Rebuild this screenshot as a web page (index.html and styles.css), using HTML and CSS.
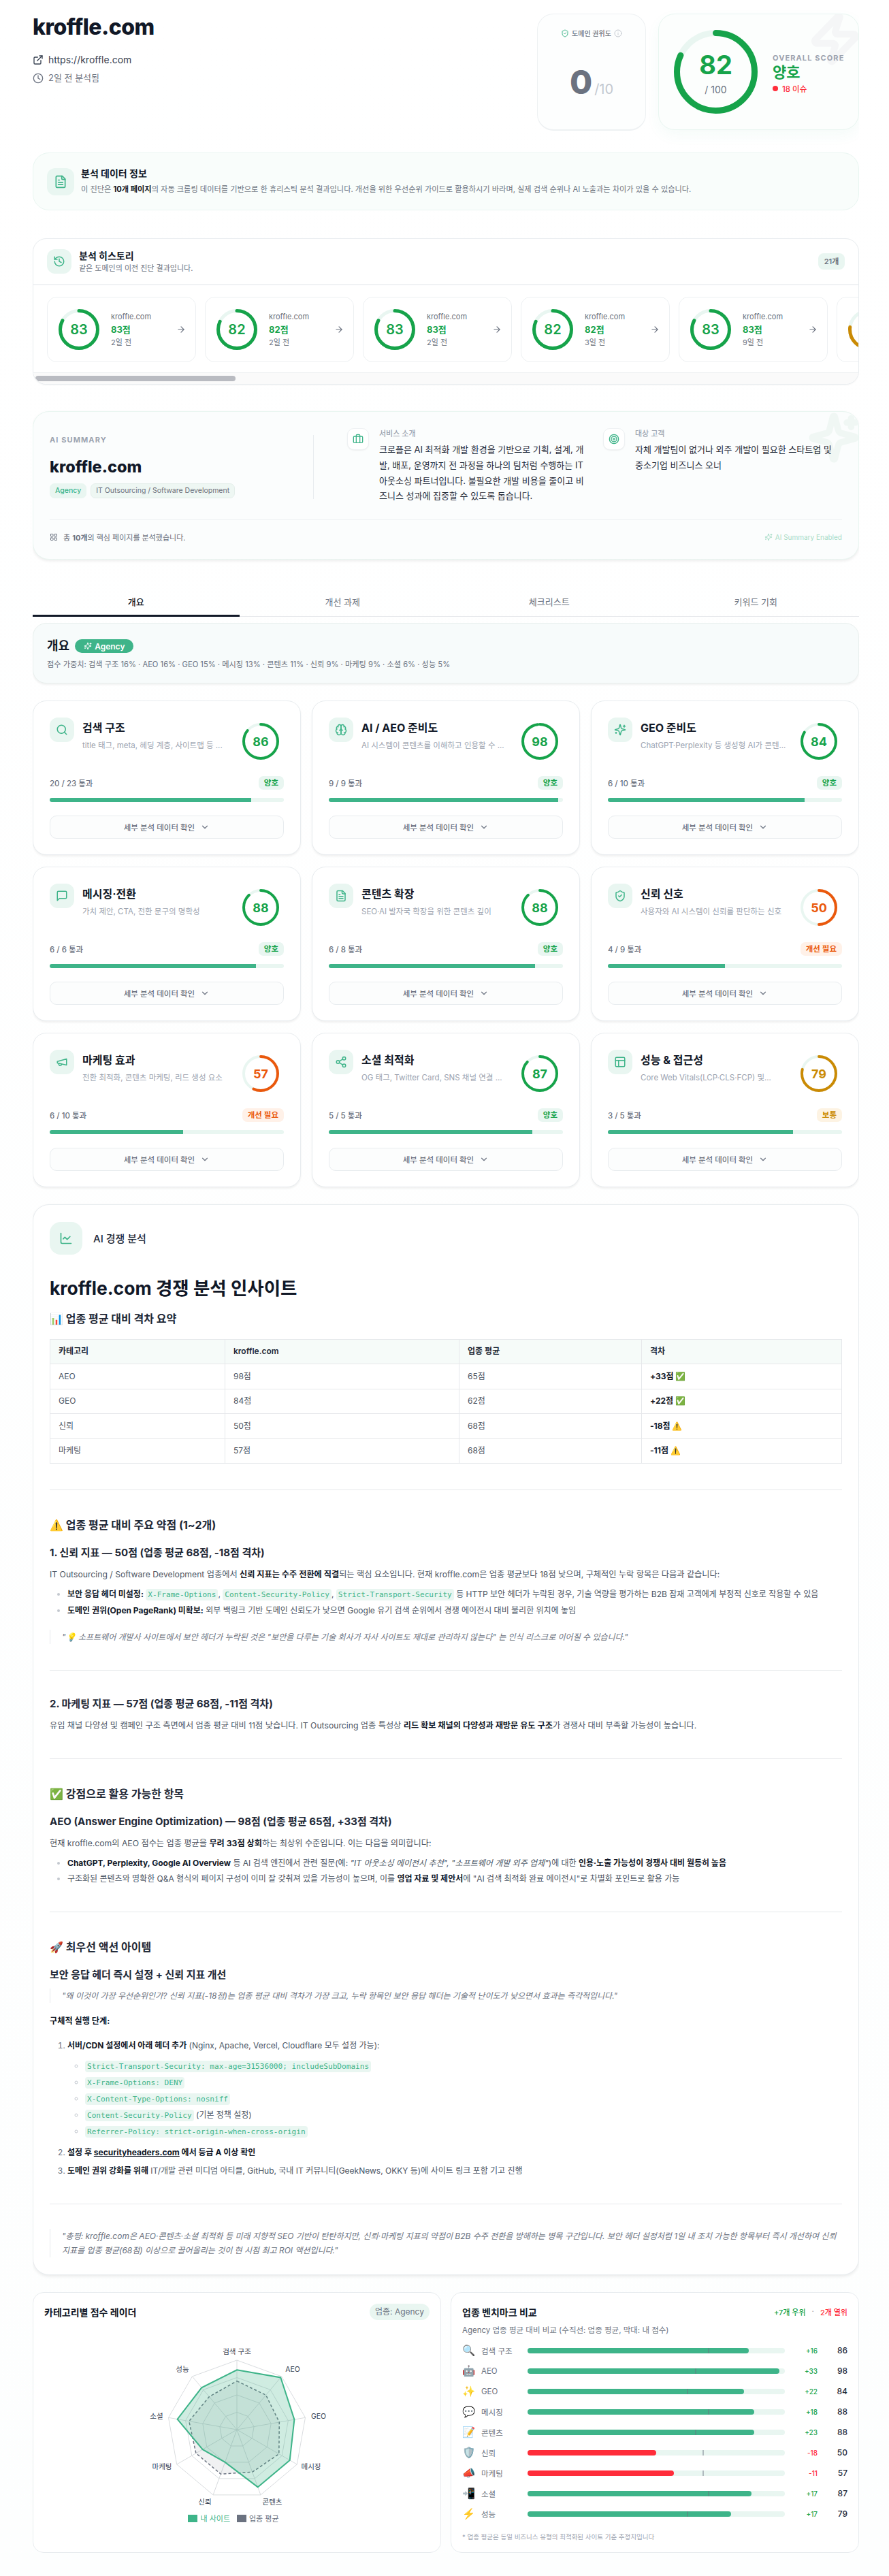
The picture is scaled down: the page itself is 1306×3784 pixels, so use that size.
FILE: index.html
```html
<!DOCTYPE html>
<html lang="ko">
  <head>
    <meta charset="UTF-8" />
    <title>kroffle.com 분석 리포트</title>
    <link rel="stylesheet" href="styles.css">
  </head>
  <body>
    <svg class="defs" width="0" height="0">
      <symbol id="i-link" viewBox="0 0 24 24"><path d="M15 3h6v6"/><path d="M10 14 21 3"/><path d="M18 13v6a2 2 0 0 1-2 2H5a2 2 0 0 1-2-2V8a2 2 0 0 1 2-2h6"/></symbol>
      <symbol id="i-clock" viewBox="0 0 24 24"><circle cx="12" cy="12" r="10"/><path d="M12 6v6l4 2"/></symbol>
      <symbol id="i-file" viewBox="0 0 24 24"><path d="M15 2H6a2 2 0 0 0-2 2v16a2 2 0 0 0 2 2h12a2 2 0 0 0 2-2V7Z"/><path d="M14 2v4a2 2 0 0 0 2 2h4"/><path d="M10 9H8"/><path d="M16 13H8"/><path d="M16 17H8"/></symbol>
      <symbol id="i-history" viewBox="0 0 24 24"><path d="M3 12a9 9 0 1 0 9-9 9.75 9.75 0 0 0-6.74 2.74L3 8"/><path d="M3 3v5h5"/><path d="M12 7v5l4 2"/></symbol>
      <symbol id="i-arrow" viewBox="0 0 24 24"><path d="M5 12h14"/><path d="m12 5 7 7-7 7"/></symbol>
      <symbol id="i-chevron" viewBox="0 0 24 24"><path d="m6 9 6 6 6-6"/></symbol>
      <symbol id="i-search" viewBox="0 0 24 24"><circle cx="11" cy="11" r="8"/><path d="m21 21-4.3-4.3"/></symbol>
      <symbol id="i-brain" viewBox="0 0 24 24"><path d="M12 5a3 3 0 1 0-5.997.125 4 4 0 0 0-2.526 5.77 4 4 0 0 0 .556 6.588A4 4 0 1 0 12 18Z"/><path d="M12 5a3 3 0 1 1 5.997.125 4 4 0 0 1 2.526 5.77 4 4 0 0 1-.556 6.588A4 4 0 1 1 12 18Z"/><path d="M15 13a4.5 4.5 0 0 1-3-4 4.5 4.5 0 0 1-3 4"/><path d="M17.599 6.5a3 3 0 0 0 .399-1.375"/><path d="M6.003 5.125A3 3 0 0 0 6.401 6.5"/><path d="M3.477 10.896a4 4 0 0 1 .585-.396"/><path d="M19.938 10.5a4 4 0 0 1 .585.396"/><path d="M6 18a4 4 0 0 1-1.967-.516"/><path d="M19.967 17.484A4 4 0 0 1 18 18"/></symbol>
      <symbol id="i-sparkles" viewBox="0 0 24 24"><path d="M9.937 15.5A2 2 0 0 0 8.5 14.063l-6.135-1.582a.5.5 0 0 1 0-.962L8.5 9.936A2 2 0 0 0 9.937 8.5l1.582-6.135a.5.5 0 0 1 .963 0L14.063 8.5A2 2 0 0 0 15.5 9.937l6.135 1.581a.5.5 0 0 1 0 .964L15.5 14.063a2 2 0 0 0-1.437 1.437l-1.582 6.135a.5.5 0 0 1-.963 0z"/><path d="M20 3v4"/><path d="M22 5h-4"/><path d="M4 17v2"/><path d="M5 18H3"/></symbol>
      <symbol id="i-message" viewBox="0 0 24 24"><path d="M21 15a2 2 0 0 1-2 2H7l-4 4V5a2 2 0 0 1 2-2h14a2 2 0 0 1 2 2z"/></symbol>
      <symbol id="i-shield" viewBox="0 0 24 24"><path d="M20 13c0 5-3.5 7.5-7.66 8.95a1 1 0 0 1-.67-.01C7.5 20.5 4 18 4 13V6a1 1 0 0 1 1-1c2 0 4.5-1.2 6.24-2.72a1.17 1.17 0 0 1 1.52 0C14.51 3.81 17 5 19 5a1 1 0 0 1 1 1z"/><path d="m9 12 2 2 4-4"/></symbol>
      <symbol id="i-megaphone" viewBox="0 0 24 24"><path d="m3 11 18-5v12L3 14v-3z"/><path d="M11.6 16.8a3 3 0 1 1-5.8-1.6"/></symbol>
      <symbol id="i-share" viewBox="0 0 24 24"><circle cx="18" cy="5" r="3"/><circle cx="6" cy="12" r="3"/><circle cx="18" cy="19" r="3"/><path d="m8.59 13.51 6.83 3.98"/><path d="m15.41 6.51-6.82 3.98"/></symbol>
      <symbol id="i-layout" viewBox="0 0 24 24"><rect x="3" y="3" width="18" height="18" rx="2"/><path d="M3 9h18"/><path d="M9 21V9"/></symbol>
      <symbol id="i-chart" viewBox="0 0 24 24"><path d="M3 3v16a2 2 0 0 0 2 2h16"/><path d="m19 9-5 5-4-4-3 3"/></symbol>
      <symbol id="i-briefcase" viewBox="0 0 24 24"><path d="M16 20V4a2 2 0 0 0-2-2h-4a2 2 0 0 0-2 2v16"/><rect x="2" y="6" width="20" height="14" rx="2"/></symbol>
      <symbol id="i-target" viewBox="0 0 24 24"><circle cx="12" cy="12" r="10"/><circle cx="12" cy="12" r="6"/><circle cx="12" cy="12" r="2"/></symbol>
      <symbol id="i-grid" viewBox="0 0 24 24"><rect x="3" y="3" width="7" height="7" rx="1"/><rect x="14" y="3" width="7" height="7" rx="1"/><rect x="14" y="14" width="7" height="7" rx="1"/><rect x="3" y="14" width="7" height="7" rx="1"/></symbol>
      <symbol id="i-info" viewBox="0 0 24 24"><circle cx="12" cy="12" r="10"/><path d="M12 16v-4"/><path d="M12 8h.01"/></symbol>
      <symbol id="i-zap" viewBox="0 0 24 24"><path d="M4 14a1 1 0 0 1-.78-1.63l9.9-10.2a.5.5 0 0 1 .86.46l-1.92 6.02A1 1 0 0 0 13 10h7a1 1 0 0 1 .78 1.63l-9.9 10.2a.5.5 0 0 1-.86-.46l1.92-6.02A1 1 0 0 0 11 14z"/></symbol>
    </svg>

    <main class="page">
      <header class="top">
        <div class="site">
          <h1>kroffle.com</h1>
          <div class="site-row"><svg class="ico ico-16"><use href="#i-link"/></svg>https://kroffle.com</div>
          <div class="site-row muted"><svg class="ico ico-16"><use href="#i-clock"/></svg>2일 전 분석됨</div>
        </div>
        <div class="authority">
          <div class="authority-label"><svg class="ico ico-12 mint"><use href="#i-shield"/></svg>도메인 권위도<svg class="ico ico-12 faint"><use href="#i-info"/></svg></div>
          <div class="authority-value"><b>0</b><span>/10</span></div>
        </div>
        <div class="overall">
          <svg class="ico deco-zap"><use href="#i-zap"/></svg>
          <div class="ring ring-xl">
            <svg viewBox="0 0 123 123"><circle class="ring-track" cx="61.5" cy="61.5" r="57" pathLength="100"/><circle class="ring-bar good" cx="61.5" cy="61.5" r="57" pathLength="100" stroke-dasharray="82 100"/></svg>
            <div class="ring-text"><b>82</b><span>/ 100</span></div>
          </div>
          <div class="overall-text">
            <div class="eyebrow">OVERALL SCORE</div>
            <div class="overall-grade">양호</div>
            <div class="overall-issues"><i></i>18 이슈</div>
          </div>
        </div>
      </header>

      <section class="info card-mint">
        <div class="tile tile-info"><svg class="ico ico-20"><use href="#i-file"/></svg></div>
        <div>
          <h3>분석 데이터 정보</h3>
          <p>이 진단은 <b>10개 페이지</b>의 자동 크롤링 데이터를 기반으로 한 휴리스틱 분석 결과입니다. 개선을 위한 우선순위 가이드로 활용하시기 바라며, 실제 검색 순위나 AI 노출과는 차이가 있을 수 있습니다.</p>
        </div>
      </section>

      <section class="history">
        <div class="history-head">
          <div class="tile"><svg class="ico ico-18"><use href="#i-history"/></svg></div>
          <div class="history-title">
            <h3>분석 히스토리</h3>
            <p>같은 도메인의 이전 진단 결과입니다.</p>
          </div>
          <span class="count">21개</span>
        </div>
        <div class="history-row">
          <a class="run">
            <div class="ring ring-md"><svg viewBox="0 0 60 60"><circle class="ring-track" cx="30" cy="30" r="27.5" pathLength="100"/><circle class="ring-bar good" cx="30" cy="30" r="27.5" pathLength="100" stroke-dasharray="83 100"/></svg><div class="ring-text"><b>83</b></div></div>
            <div class="run-text"><span>kroffle.com</span><b>83점</b><span>2일 전</span></div>
            <svg class="ico ico-14 gray"><use href="#i-arrow"/></svg>
          </a>
          <a class="run">
            <div class="ring ring-md"><svg viewBox="0 0 60 60"><circle class="ring-track" cx="30" cy="30" r="27.5" pathLength="100"/><circle class="ring-bar good" cx="30" cy="30" r="27.5" pathLength="100" stroke-dasharray="82 100"/></svg><div class="ring-text"><b>82</b></div></div>
            <div class="run-text"><span>kroffle.com</span><b>82점</b><span>2일 전</span></div>
            <svg class="ico ico-14 gray"><use href="#i-arrow"/></svg>
          </a>
          <a class="run">
            <div class="ring ring-md"><svg viewBox="0 0 60 60"><circle class="ring-track" cx="30" cy="30" r="27.5" pathLength="100"/><circle class="ring-bar good" cx="30" cy="30" r="27.5" pathLength="100" stroke-dasharray="83 100"/></svg><div class="ring-text"><b>83</b></div></div>
            <div class="run-text"><span>kroffle.com</span><b>83점</b><span>2일 전</span></div>
            <svg class="ico ico-14 gray"><use href="#i-arrow"/></svg>
          </a>
          <a class="run">
            <div class="ring ring-md"><svg viewBox="0 0 60 60"><circle class="ring-track" cx="30" cy="30" r="27.5" pathLength="100"/><circle class="ring-bar good" cx="30" cy="30" r="27.5" pathLength="100" stroke-dasharray="82 100"/></svg><div class="ring-text"><b>82</b></div></div>
            <div class="run-text"><span>kroffle.com</span><b>82점</b><span>3일 전</span></div>
            <svg class="ico ico-14 gray"><use href="#i-arrow"/></svg>
          </a>
          <a class="run">
            <div class="ring ring-md"><svg viewBox="0 0 60 60"><circle class="ring-track" cx="30" cy="30" r="27.5" pathLength="100"/><circle class="ring-bar good" cx="30" cy="30" r="27.5" pathLength="100" stroke-dasharray="83 100"/></svg><div class="ring-text"><b>83</b></div></div>
            <div class="run-text"><span>kroffle.com</span><b>83점</b><span>9일 전</span></div>
            <svg class="ico ico-14 gray"><use href="#i-arrow"/></svg>
          </a>
          <a class="run">
            <div class="ring ring-md"><svg viewBox="0 0 60 60"><circle class="ring-track" cx="30" cy="30" r="27.5" pathLength="100"/><circle class="ring-bar fair" cx="30" cy="30" r="27.5" pathLength="100" stroke-dasharray="77 100"/></svg></div>
          </a>
        </div>
        <div class="scrollbar"><div class="scrollbar-thumb"></div></div>
      </section>

      <section class="summary">
        <svg class="ico deco-spark"><use href="#i-sparkles"/></svg>
        <div class="summary-body">
          <div class="summary-main">
            <div class="eyebrow">AI SUMMARY</div>
            <h2>kroffle.com</h2>
            <div class="tags"><span class="tag tag-mint">Agency</span><span class="tag">IT Outsourcing / Software Development</span></div>
          </div>
          <div class="summary-cols">
            <div class="summary-col">
              <div class="tile-white"><svg class="ico ico-16"><use href="#i-briefcase"/></svg></div>
              <div>
                <div class="summary-label">서비스 소개</div>
                <p>크로플은 AI 최적화 개발 환경을 기반으로 기획, 설계, 개발, 배포, 운영까지 전 과정을 하나의 팀처럼 수행하는 IT 아웃소싱 파트너입니다. 불필요한 개발 비용을 줄이고 비즈니스 성과에 집중할 수 있도록 돕습니다.</p>
              </div>
            </div>
            <div class="summary-col">
              <div class="tile-white"><svg class="ico ico-16"><use href="#i-target"/></svg></div>
              <div>
                <div class="summary-label">대상 고객</div>
                <p>자체 개발팀이 없거나 외주 개발이 필요한 스타트업 및 중소기업 비즈니스 오너</p>
              </div>
            </div>
          </div>
        </div>
        <div class="summary-foot">
          <div class="summary-pages"><svg class="ico ico-12"><use href="#i-grid"/></svg><span>총 <b>10개</b>의 핵심 페이지를 분석했습니다.</span></div>
          <div class="summary-flag"><svg class="ico ico-12"><use href="#i-sparkles"/></svg>AI Summary Enabled</div>
        </div>
      </section>

      <nav class="tabs">
        <a class="tab active">개요</a>
        <a class="tab">개선 과제</a>
        <a class="tab">체크리스트</a>
        <a class="tab">키워드 기회</a>
      </nav>

      <section class="overview">
        <div class="overview-title"><h2>개요</h2><span class="badge"><svg class="ico ico-12"><use href="#i-sparkles"/></svg>Agency</span></div>
        <p>점수 가중치: 검색 구조 16% · AEO 16% · GEO 15% · 메시징 13% · 콘텐츠 11% · 신뢰 9% · 마케팅 9% · 소셜 6% · 성능 5%</p>
      </section>

      <section class="cats">
        <article class="cat">
          <div class="cat-head">
            <div class="tile"><svg class="ico ico-18"><use href="#i-search"/></svg></div>
            <div class="cat-title"><h3>검색 구조</h3><p>title 태그, meta, 헤딩 계층, 사이트맵 등 ...</p></div>
            <div class="ring ring-sm"><svg viewBox="0 0 54 54"><circle class="ring-track" cx="27" cy="27" r="25" pathLength="100"/><circle class="ring-bar good" cx="27" cy="27" r="25" pathLength="100" stroke-dasharray="86 100"/></svg><div class="ring-text"><b>86</b></div></div>
          </div>
          <div class="cat-stat"><span>20 / 23 통과</span><em class="grade good">양호</em></div>
          <div class="bar"><i style="width: 86%"></i></div>
          <button class="more">세부 분석 데이터 확인<svg class="ico ico-14"><use href="#i-chevron"/></svg></button>
        </article>
        <article class="cat">
          <div class="cat-head">
            <div class="tile"><svg class="ico ico-18"><use href="#i-brain"/></svg></div>
            <div class="cat-title"><h3>AI / AEO 준비도</h3><p>AI 시스템이 콘텐츠를 이해하고 인용할 수 ...</p></div>
            <div class="ring ring-sm"><svg viewBox="0 0 54 54"><circle class="ring-track" cx="27" cy="27" r="25" pathLength="100"/><circle class="ring-bar good" cx="27" cy="27" r="25" pathLength="100" stroke-dasharray="98 100"/></svg><div class="ring-text"><b>98</b></div></div>
          </div>
          <div class="cat-stat"><span>9 / 9 통과</span><em class="grade good">양호</em></div>
          <div class="bar"><i style="width: 98%"></i></div>
          <button class="more">세부 분석 데이터 확인<svg class="ico ico-14"><use href="#i-chevron"/></svg></button>
        </article>
        <article class="cat">
          <div class="cat-head">
            <div class="tile"><svg class="ico ico-18"><use href="#i-sparkles"/></svg></div>
            <div class="cat-title"><h3>GEO 준비도</h3><p>ChatGPT·Perplexity 등 생성형 AI가 콘텐...</p></div>
            <div class="ring ring-sm"><svg viewBox="0 0 54 54"><circle class="ring-track" cx="27" cy="27" r="25" pathLength="100"/><circle class="ring-bar good" cx="27" cy="27" r="25" pathLength="100" stroke-dasharray="84 100"/></svg><div class="ring-text"><b>84</b></div></div>
          </div>
          <div class="cat-stat"><span>6 / 10 통과</span><em class="grade good">양호</em></div>
          <div class="bar"><i style="width: 84%"></i></div>
          <button class="more">세부 분석 데이터 확인<svg class="ico ico-14"><use href="#i-chevron"/></svg></button>
        </article>
        <article class="cat">
          <div class="cat-head">
            <div class="tile"><svg class="ico ico-18"><use href="#i-message"/></svg></div>
            <div class="cat-title"><h3>메시징·전환</h3><p>가치 제안, CTA, 전환 문구의 명확성</p></div>
            <div class="ring ring-sm"><svg viewBox="0 0 54 54"><circle class="ring-track" cx="27" cy="27" r="25" pathLength="100"/><circle class="ring-bar good" cx="27" cy="27" r="25" pathLength="100" stroke-dasharray="88 100"/></svg><div class="ring-text"><b>88</b></div></div>
          </div>
          <div class="cat-stat"><span>6 / 6 통과</span><em class="grade good">양호</em></div>
          <div class="bar"><i style="width: 88%"></i></div>
          <button class="more">세부 분석 데이터 확인<svg class="ico ico-14"><use href="#i-chevron"/></svg></button>
        </article>
        <article class="cat">
          <div class="cat-head">
            <div class="tile"><svg class="ico ico-18"><use href="#i-file"/></svg></div>
            <div class="cat-title"><h3>콘텐츠 확장</h3><p>SEO·AI 발자국 확장을 위한 콘텐츠 깊이</p></div>
            <div class="ring ring-sm"><svg viewBox="0 0 54 54"><circle class="ring-track" cx="27" cy="27" r="25" pathLength="100"/><circle class="ring-bar good" cx="27" cy="27" r="25" pathLength="100" stroke-dasharray="88 100"/></svg><div class="ring-text"><b>88</b></div></div>
          </div>
          <div class="cat-stat"><span>6 / 8 통과</span><em class="grade good">양호</em></div>
          <div class="bar"><i style="width: 88%"></i></div>
          <button class="more">세부 분석 데이터 확인<svg class="ico ico-14"><use href="#i-chevron"/></svg></button>
        </article>
        <article class="cat">
          <div class="cat-head">
            <div class="tile"><svg class="ico ico-18"><use href="#i-shield"/></svg></div>
            <div class="cat-title"><h3>신뢰 신호</h3><p>사용자와 AI 시스템이 신뢰를 판단하는 신호</p></div>
            <div class="ring ring-sm"><svg viewBox="0 0 54 54"><circle class="ring-track" cx="27" cy="27" r="25" pathLength="100"/><circle class="ring-bar poor" cx="27" cy="27" r="25" pathLength="100" stroke-dasharray="50 100"/></svg><div class="ring-text poor-text"><b>50</b></div></div>
          </div>
          <div class="cat-stat"><span>4 / 9 통과</span><em class="grade poor">개선 필요</em></div>
          <div class="bar"><i style="width: 50%"></i></div>
          <button class="more">세부 분석 데이터 확인<svg class="ico ico-14"><use href="#i-chevron"/></svg></button>
        </article>
        <article class="cat">
          <div class="cat-head">
            <div class="tile"><svg class="ico ico-18"><use href="#i-megaphone"/></svg></div>
            <div class="cat-title"><h3>마케팅 효과</h3><p>전환 최적화, 콘텐츠 마케팅, 리드 생성 요소</p></div>
            <div class="ring ring-sm"><svg viewBox="0 0 54 54"><circle class="ring-track" cx="27" cy="27" r="25" pathLength="100"/><circle class="ring-bar poor" cx="27" cy="27" r="25" pathLength="100" stroke-dasharray="57 100"/></svg><div class="ring-text poor-text"><b>57</b></div></div>
          </div>
          <div class="cat-stat"><span>6 / 10 통과</span><em class="grade poor">개선 필요</em></div>
          <div class="bar"><i style="width: 57%"></i></div>
          <button class="more">세부 분석 데이터 확인<svg class="ico ico-14"><use href="#i-chevron"/></svg></button>
        </article>
        <article class="cat">
          <div class="cat-head">
            <div class="tile"><svg class="ico ico-18"><use href="#i-share"/></svg></div>
            <div class="cat-title"><h3>소셜 최적화</h3><p>OG 태그, Twitter Card, SNS 채널 연결 ...</p></div>
            <div class="ring ring-sm"><svg viewBox="0 0 54 54"><circle class="ring-track" cx="27" cy="27" r="25" pathLength="100"/><circle class="ring-bar good" cx="27" cy="27" r="25" pathLength="100" stroke-dasharray="87 100"/></svg><div class="ring-text"><b>87</b></div></div>
          </div>
          <div class="cat-stat"><span>5 / 5 통과</span><em class="grade good">양호</em></div>
          <div class="bar"><i style="width: 87%"></i></div>
          <button class="more">세부 분석 데이터 확인<svg class="ico ico-14"><use href="#i-chevron"/></svg></button>
        </article>
        <article class="cat">
          <div class="cat-head">
            <div class="tile"><svg class="ico ico-18"><use href="#i-layout"/></svg></div>
            <div class="cat-title"><h3>성능 &amp; 접근성</h3><p>Core Web Vitals(LCP·CLS·FCP) 및...</p></div>
            <div class="ring ring-sm"><svg viewBox="0 0 54 54"><circle class="ring-track" cx="27" cy="27" r="25" pathLength="100"/><circle class="ring-bar fair" cx="27" cy="27" r="25" pathLength="100" stroke-dasharray="79 100"/></svg><div class="ring-text fair-text"><b>79</b></div></div>
          </div>
          <div class="cat-stat"><span>3 / 5 통과</span><em class="grade fair">보통</em></div>
          <div class="bar"><i style="width: 79%"></i></div>
          <button class="more">세부 분석 데이터 확인<svg class="ico ico-14"><use href="#i-chevron"/></svg></button>
        </article>
      </section>

      <section class="insight">
        <div class="insight-head">
          <div class="tile tile-lg"><svg class="ico ico-20"><use href="#i-chart"/></svg></div>
          <span>AI 경쟁 분석</span>
        </div>
        <div class="prose">
          <h1>kroffle.com 경쟁 분석 인사이트</h1>
          <h2>📊 업종 평균 대비 격차 요약</h2>
          <table>
            <thead>
              <tr><th>카테고리</th><th>kroffle.com</th><th>업종 평균</th><th>격차</th></tr>
            </thead>
            <tbody>
              <tr><td>AEO</td><td>98점</td><td>65점</td><td><strong>+33점 ✅</strong></td></tr>
              <tr><td>GEO</td><td>84점</td><td>62점</td><td><strong>+22점 ✅</strong></td></tr>
              <tr><td>신뢰</td><td>50점</td><td>68점</td><td><strong>-18점 ⚠️</strong></td></tr>
              <tr><td>마케팅</td><td>57점</td><td>68점</td><td><strong>-11점 ⚠️</strong></td></tr>
            </tbody>
          </table>
          <hr />
          <h2>⚠️ 업종 평균 대비 주요 약점 (1~2개)</h2>
          <h3>1. 신뢰 지표 — 50점 (업종 평균 68점, -18점 격차)</h3>
          <p>IT Outsourcing / Software Development 업종에서 <strong>신뢰 지표는 수주 전환에 직결</strong>되는 핵심 요소입니다. 현재 kroffle.com은 업종 평균보다 18점 낮으며, 구체적인 누락 항목은 다음과 같습니다:</p>
          <ul>
            <li><strong>보안 응답 헤더 미설정:</strong> <code>X-Frame-Options</code>, <code>Content-Security-Policy</code>, <code>Strict-Transport-Security</code> 등 HTTP 보안 헤더가 누락된 경우, 기술 역량을 평가하는 B2B 잠재 고객에게 부정적 신호로 작용할 수 있음</li>
            <li><strong>도메인 권위(Open PageRank) 미확보:</strong> 외부 백링크 기반 도메인 신뢰도가 낮으면 Google 유기 검색 순위에서 경쟁 에이전시 대비 불리한 위치에 놓임</li>
          </ul>
          <blockquote>"💡 소프트웨어 개발사 사이트에서 보안 헤더가 누락된 것은 "보안을 다루는 기술 회사가 자사 사이트도 제대로 관리하지 않는다" 는 인식 리스크로 이어질 수 있습니다."</blockquote>
          <hr />
          <h3>2. 마케팅 지표 — 57점 (업종 평균 68점, -11점 격차)</h3>
          <p>유입 채널 다양성 및 캠페인 구조 측면에서 업종 평균 대비 11점 낮습니다. IT Outsourcing 업종 특성상 <strong>리드 확보 채널의 다양성과 재방문 유도 구조</strong>가 경쟁사 대비 부족할 가능성이 높습니다.</p>
          <hr />
          <h2>✅ 강점으로 활용 가능한 항목</h2>
          <h3>AEO (Answer Engine Optimization) — 98점 (업종 평균 65점, +33점 격차)</h3>
          <p>현재 kroffle.com의 AEO 점수는 업종 평균을 <strong>무려 33점 상회</strong>하는 최상위 수준입니다. 이는 다음을 의미합니다:</p>
          <ul>
            <li><strong>ChatGPT, Perplexity, Google AI Overview</strong> 등 AI 검색 엔진에서 관련 질문(예: <em>"IT 아웃소싱 에이전시 추천", "소프트웨어 개발 외주 업체"</em>)에 대한 <strong>인용·노출 가능성이 경쟁사 대비 월등히 높음</strong></li>
            <li>구조화된 콘텐츠와 명확한 Q&amp;A 형식의 페이지 구성이 이미 잘 갖춰져 있을 가능성이 높으며, 이를 <strong>영업 자료 및 제안서</strong>에 "AI 검색 최적화 완료 에이전시"로 차별화 포인트로 활용 가능</li>
          </ul>
          <hr />
          <h2>🚀 최우선 액션 아이템</h2>
          <h3>보안 응답 헤더 즉시 설정 + 신뢰 지표 개선</h3>
          <blockquote class="why">"왜 이것이 가장 우선순위인가? 신뢰 지표(-18점)는 업종 평균 대비 격차가 가장 크고, 누락 항목인 보안 응답 헤더는 기술적 난이도가 낮으면서 효과는 즉각적입니다."</blockquote>
          <p class="steps-title"><strong>구체적 실행 단계:</strong></p>
          <ol>
            <li><strong>서버/CDN 설정에서 아래 헤더 추가</strong> (Nginx, Apache, Vercel, Cloudflare 모두 설정 가능):
              <ul class="code-list">
                <li><code>Strict-Transport-Security: max-age=31536000; includeSubDomains</code></li>
                <li><code>X-Frame-Options: DENY</code></li>
                <li><code>X-Content-Type-Options: nosniff</code></li>
                <li><code>Content-Security-Policy</code> (기본 정책 설정)</li>
                <li><code>Referrer-Policy: strict-origin-when-cross-origin</code></li>
              </ul>
            </li>
            <li><strong>설정 후 <a>securityheaders.com</a> 에서 등급 A 이상 확인</strong></li>
            <li><strong>도메인 권위 강화를 위해</strong> IT/개발 관련 미디엄 아티클, GitHub, 국내 IT 커뮤니티(GeekNews, OKKY 등)에 사이트 링크 포함 기고 진행</li>
          </ol>
          <hr />
          <blockquote class="verdict">"총평: kroffle.com은 AEO·콘텐츠·소셜 최적화 등 미래 지향적 SEO 기반이 탄탄하지만, 신뢰·마케팅 지표의 약점이 B2B 수주 전환을 방해하는 병목 구간입니다. 보안 헤더 설정처럼 1일 내 조치 가능한 항목부터 즉시 개선하여 신뢰 지표를 업종 평균(68점) 이상으로 끌어올리는 것이 현 시점 최고 ROI 액션입니다."</blockquote>
        </div>
      </section>

      <section class="bottom">
        <div class="panel">
          <div class="panel-head"><h3>카테고리별 점수 레이더</h3><span class="pill">업종: Agency</span></div>
          <svg class="radar" viewBox="-150 -130 300 250" width="300" height="250">
            <g class="radar-grid">
              <polygon points="0,-102 65.6,-78.1 100.5,-17.7 88.3,51 34.9,95.9 -34.9,95.9 -88.3,51 -100.5,-17.7 -65.6,-78.1"/>
              <polygon points="0,-76.5 49.2,-58.6 75.4,-13.3 66.2,38.3 26.2,71.9 -26.2,71.9 -66.2,38.3 -75.4,-13.3 -49.2,-58.6"/>
              <polygon points="0,-51 32.8,-39.1 50.2,-8.9 44.2,25.5 17.4,47.9 -17.4,47.9 -44.2,25.5 -50.2,-8.9 -32.8,-39.1"/>
              <polygon points="0,-25.5 16.4,-19.5 25.1,-4.4 22.1,12.8 8.7,24 -8.7,24 -22.1,12.8 -25.1,-4.4 -16.4,-19.5"/>
              <path d="M0 0 0 -102M0 0 65.6 -78.1M0 0 100.5 -17.7M0 0 88.3 51M0 0 34.9 95.9M0 0 -34.9 95.9M0 0 -88.3 51M0 0 -100.5 -17.7M0 0 -65.6 -78.1"/>
            </g>
            <polygon class="radar-avg" points="0,-71.4 42.6,-50.8 62.3,-11 61.8,35.7 22.7,62.3 -23.7,65.2 -60.1,34.7 -70.3,-12.4 -40.6,-48.4"/>
            <polygon class="radar-site" points="0,-87.7 64.3,-76.6 84.4,-14.9 77.7,44.9 30.7,84.4 -17.4,47.9 -50.3,29.1 -87.4,-15.4 -51.8,-61.7"/>
            <g class="radar-labels">
              <text x="0" y="-114">검색 구조</text>
              <text x="82" y="-88">AEO</text>
              <text x="120" y="-19">GEO</text>
              <text x="109" y="55">메시징</text>
              <text x="52" y="107">콘텐츠</text>
              <text x="-47" y="107">신뢰</text>
              <text x="-110" y="55">마케팅</text>
              <text x="-118" y="-19">소셜</text>
              <text x="-80" y="-88">성능</text>
            </g>
          </svg>
          <div class="legend"><span class="legend-site"><i></i>내 사이트</span><span class="legend-avg"><i></i>업종 평균</span></div>
        </div>

        <div class="panel">
          <div class="panel-head bench-head"><h3>업종 벤치마크 비교</h3><div class="bench-sum"><span class="up">+7개 우위</span><span class="dot">·</span><span class="down">2개 열위</span></div></div>
          <p class="bench-sub">Agency 업종 평균 대비 비교 (수직선: 업종 평균, 막대: 내 점수)</p>
          <div class="bench">
            <div class="bench-row"><span class="bench-name"><i>🔍</i>검색 구조</span><div class="track"><b style="width: 86%"></b><u style="left: 70%"></u></div><span class="delta up">+16</span><span class="num">86</span></div>
            <div class="bench-row"><span class="bench-name"><i>🤖</i>AEO</span><div class="track"><b style="width: 98%"></b><u style="left: 65%"></u></div><span class="delta up">+33</span><span class="num">98</span></div>
            <div class="bench-row"><span class="bench-name"><i>✨</i>GEO</span><div class="track"><b style="width: 84%"></b><u style="left: 62%"></u></div><span class="delta up">+22</span><span class="num">84</span></div>
            <div class="bench-row"><span class="bench-name"><i>💬</i>메시징</span><div class="track"><b style="width: 88%"></b><u style="left: 70%"></u></div><span class="delta up">+18</span><span class="num">88</span></div>
            <div class="bench-row"><span class="bench-name"><i>📝</i>콘텐츠</span><div class="track"><b style="width: 88%"></b><u style="left: 65%"></u></div><span class="delta up">+23</span><span class="num">88</span></div>
            <div class="bench-row"><span class="bench-name"><i>🛡️</i>신뢰</span><div class="track"><b class="low" style="width: 50%"></b><u style="left: 68%"></u></div><span class="delta down">-18</span><span class="num">50</span></div>
            <div class="bench-row"><span class="bench-name"><i>📣</i>마케팅</span><div class="track"><b class="low" style="width: 57%"></b><u style="left: 68%"></u></div><span class="delta down">-11</span><span class="num">57</span></div>
            <div class="bench-row"><span class="bench-name"><i>📲</i>소셜</span><div class="track"><b style="width: 87%"></b><u style="left: 70%"></u></div><span class="delta up">+17</span><span class="num">87</span></div>
            <div class="bench-row"><span class="bench-name"><i>⚡</i>성능</span><div class="track"><b style="width: 79%"></b><u style="left: 62%"></u></div><span class="delta up">+17</span><span class="num">79</span></div>
          </div>
          <p class="bench-note">* 업종 평균은 동일 비즈니스 유형의 최적화된 사이트 기준 추정치입니다</p>
        </div>
      </section>
    </main>
  </body>
</html>
```

FILE: styles.css
```css
* {
  box-sizing: border-box;
}

body {
  margin: 0;
  background-color: #fff;
  background-image: linear-gradient(to bottom, #fff 0%, #fdfefe 100%);
  font-family: Inter, "Noto Sans CJK KR", sans-serif;
  color: #111827;
  font-size: 14px;
}

h1, h2, h3, p {
  margin: 0;
}

.defs {
  position: absolute;
}

.page {
  width: 1214px;
  margin-left: 48px;
  padding-top: 20px;
  height: 3784px;
  overflow: hidden;
}

/* icons */
.ico {
  fill: none;
  stroke: currentColor;
  stroke-width: 2;
  stroke-linecap: round;
  stroke-linejoin: round;
  flex: none;
}

.ico-12 { width: 12px; height: 12px; }
.ico-14 { width: 14px; height: 14px; }
.ico-16 { width: 16px; height: 16px; }
.ico-18 { width: 18px; height: 18px; }
.ico-20 { width: 20px; height: 20px; }

.mint { color: #3eb489; }
.faint { color: #c3c8cf; }
.gray { color: #6b7280; }

.tile {
  width: 36px;
  height: 36px;
  border-radius: 12px;
  background-color: #e9f6f1;
  color: #3eb489;
  display: flex;
  align-items: center;
  justify-content: center;
  flex: none;
}

/* rings */
.ring {
  position: relative;
  flex: none;
}

.ring svg {
  display: block;
  width: 100%;
  height: 100%;
  transform: rotate(-90deg);
}

.ring circle {
  fill: none;
  stroke-linecap: round;
}

.ring-track { stroke: #e9f6f1; }
.ring-bar.good { stroke: #16a34a; }
.ring-bar.fair { stroke: #ca8a04; }
.ring-bar.poor { stroke: #ea580c; }

.ring-text {
  position: absolute;
  inset: 0;
  display: flex;
  flex-direction: column;
  align-items: center;
  justify-content: center;
  color: #16a34a;
}

.ring-text b {
  font-weight: 700;
}

.poor-text { color: #ea580c; }
.fair-text { color: #ca8a04; }

.ring-xl { width: 123px; height: 123px; }
.ring-xl circle { stroke-width: 9; }
.ring-xl b { font-size: 38px; line-height: 46px; }
.ring-xl span { font-size: 14px; color: #6b7280; margin-top: 5px; }

.ring-md { width: 60px; height: 60px; }
.ring-md circle { stroke-width: 5; }
.ring-md b { font-size: 20px; font-weight: 600; }

.ring-sm { width: 54px; height: 54px; margin: 8px 7px 0 0; }
.ring-sm circle { stroke-width: 4; }
.ring-sm b { font-size: 18px; }

/* top */
.top {
  display: flex;
  height: 172px;
}

.site {
  flex: 1;
}

.site h1 {
  font-size: 32px;
  line-height: 40px;
  font-weight: 800;
  letter-spacing: -0.5px;
  margin-bottom: 14px;
  color: #111827;
}

.site-row {
  display: flex;
  align-items: center;
  gap: 7px;
  font-size: 14px;
  line-height: 27px;
  color: #374151;
}

.site-row.muted {
  font-size: 13px;
  color: #6b7280;
}

.authority {
  width: 160px;
  border: 1px solid #eef1f3;
  border-bottom-width: 2px;
  border-radius: 24px;
  background-color: #fdfefe;
  text-align: center;
  padding-top: 20px;
}

.authority-label {
  display: flex;
  align-items: center;
  justify-content: center;
  gap: 4px;
  font-size: 10px;
  font-weight: 500;
  color: #6b7280;
}

.authority-value {
  margin-top: 37px;
  display: flex;
  align-items: baseline;
  justify-content: center;
  gap: 3px;
}

.authority-value b {
  font-size: 48px;
  line-height: 56px;
  font-weight: 800;
  color: #6b7280;
}

.authority-value span {
  font-size: 20px;
  color: #c3c8cf;
}

.overall {
  position: relative;
  width: 295px;
  margin-left: 18px;
  height: 171px;
  border: 1px solid #e9f6f1;
  border-radius: 24px;
  background-color: #fcfefd;
  box-shadow: 0 8px 20px rgba(62, 180, 137, 0.05);
  display: flex;
  align-items: center;
  padding-left: 22px;
  gap: 22px;
  overflow: hidden;
}

.deco-zap {
  position: absolute;
  top: -4px;
  right: -6px;
  width: 80px;
  height: 80px;
  color: #f5f6f7;
  stroke-width: 3;
}

.overall-text {
  position: relative;
  padding-top: 5px;
}

.eyebrow {
  font-size: 11px;
  line-height: 14px;
  font-weight: 700;
  letter-spacing: 1.1px;
  color: #9ca3af;
}

.overall-grade {
  font-size: 22px;
  line-height: 28px;
  font-weight: 700;
  color: #16a34a;
}

.overall-issues {
  display: flex;
  align-items: center;
  gap: 6px;
  height: 16px;
  font-size: 11.5px;
  font-weight: 500;
  color: #ff2d3a;
  margin-top: 2px;
}

.overall-issues i {
  width: 8px;
  height: 8px;
  border-radius: 50%;
  background-color: #ff2d3a;
}

/* data info */
.info {
  margin-top: 32px;
  height: 85px;
  border: 1px solid #e9f6f1;
  border-radius: 24px;
  background-color: #f9fdfb;
  display: flex;
  align-items: center;
  gap: 10px;
  padding: 0 20px;
}

.tile-info {
  width: 40px;
  height: 40px;
}

.info h3 {
  font-size: 14px;
  line-height: 20px;
  font-weight: 700;
}

.info p {
  font-size: 11.2px;
  line-height: 20px;
  color: #6b7280;
  margin-top: 3px;
}

.info b {
  color: #111827;
}

/* history */
.history {
  margin-top: 41px;
  height: 215px;
  border: 1px solid #e8ecef;
  border-radius: 20px;
  background-color: #fff;
  overflow: hidden;
  box-shadow: 0 1px 2px rgba(0, 0, 0, 0.04);
}

.history-head {
  display: flex;
  align-items: center;
  gap: 11px;
  height: 68px;
  padding: 0 20px;
  border-bottom: 2px solid #f0f2f4;
}

.history-title {
  flex: 1;
}

.history-title h3 {
  font-size: 14px;
  line-height: 20px;
  font-weight: 700;
}

.history-title p {
  font-size: 11px;
  line-height: 16px;
  color: #6b7280;
}

.count {
  width: 39px;
  height: 24px;
  line-height: 24px;
  border-radius: 8px;
  background-color: #e9f6f1;
  text-align: center;
  font-size: 11px;
  font-weight: 600;
  color: #6b7280;
}

.history-row {
  display: flex;
  gap: 13px;
  height: 129px;
  padding: 17px 20px 0;
  overflow: hidden;
  border-bottom: 1px solid #eceff1;
}

.run {
  width: 219px;
  height: 96px;
  flex: none;
  border: 1px solid #edf0f2;
  border-radius: 14px;
  background-color: #fff;
  display: flex;
  align-items: center;
  padding: 0 14px 0 16px;
  gap: 17px;
}

.run-text {
  flex: 1;
  display: flex;
  flex-direction: column;
  gap: 2px;
  font-size: 11px;
  line-height: 15px;
  color: #6b7280;
}

.run-text b {
  font-size: 13px;
  line-height: 19px;
  color: #16a34a;
}

.scrollbar {
  height: 16px;
  background-color: #fafafa;
  padding: 4px 3px;
}

.scrollbar-thumb {
  width: 294px;
  height: 8px;
  border-radius: 4px;
  background-color: #b9bbc1;
}

/* summary */
.summary {
  position: relative;
  margin-top: 39px;
  height: 218px;
  border: 1px solid #e9f6f1;
  border-radius: 24px;
  background-color: #fbfdfd;
  box-shadow: 0 2px 4px rgba(0, 0, 0, 0.08);
  padding: 24px 24px 0;
  overflow: hidden;
}

.deco-spark {
  position: absolute;
  top: 0;
  right: -2px;
  width: 76px;
  height: 76px;
  color: #f0f7f4;
  stroke-width: 3;
}

.summary-body {
  position: relative;
  display: flex;
  height: 135px;
  border-bottom: 1px solid #eef1f3;
}

.summary-main {
  width: 388px;
  height: 94px;
  margin-top: 10px;
  border-right: 1px solid #e8ecef;
}

.summary-main h2 {
  font-size: 23.5px;
  line-height: 32px;
  font-weight: 800;
  margin-top: 17px;
}

.tags {
  display: flex;
  gap: 6px;
  margin-top: 8px;
}

.tag {
  height: 22px;
  line-height: 20px;
  padding: 0 7px;
  border: 1px solid #e4eeea;
  border-radius: 7px;
  background-color: #eef7f3;
  font-size: 10.5px;
  color: #6b7280;
}

.tag-mint {
  border-color: #e9f6f1;
  background-color: #e9f6f1;
  color: #3eb489;
  font-weight: 500;
}

.summary-cols {
  display: flex;
  padding-left: 49px;
  gap: 28px;
}

.summary-col {
  display: flex;
  gap: 15px;
  width: 348px;
}

.summary-col:last-child {
  width: 339px;
}

.tile-white {
  width: 32px;
  height: 32px;
  flex: none;
  border: 1px solid #eef1f3;
  border-radius: 10px;
  background-color: #fff;
  color: #3eb489;
  display: flex;
  align-items: center;
  justify-content: center;
  box-shadow: 0 1px 2px rgba(0, 0, 0, 0.06);
}

.summary-label {
  font-size: 11px;
  line-height: 16px;
  font-weight: 500;
  color: #9ca3af;
  margin-bottom: 4px;
}

.summary-col p {
  font-size: 13px;
  line-height: 22.75px;
  color: #1f2937;
  word-break: break-all;
}

.summary-foot {
  position: relative;
  display: flex;
  justify-content: space-between;
  align-items: center;
  height: 50px;
  font-size: 11px;
  color: #6b7280;
}

.summary-pages,
.summary-flag {
  display: flex;
  align-items: center;
  gap: 8px;
}

.summary-flag {
  color: #a9dcc8;
  font-size: 10px;
  gap: 4px;
}

/* tabs */
.tabs {
  display: grid;
  grid-template-columns: repeat(4, 1fr);
  margin-top: 46px;
  height: 38px;
  border-bottom: 1px solid #e6e8eb;
}

.tab {
  text-align: center;
  font-size: 13px;
  line-height: 32px;
  color: #6b7280;
  height: 38px;
}

.tab.active {
  color: #111827;
  font-weight: 500;
  border-bottom: 3px solid #111827;
}

/* overview */
.overview {
  margin-top: 9px;
  height: 89px;
  border: 1px solid #e9f0ee;
  border-radius: 20px;
  background-color: #f7fbfb;
  box-shadow: 0 2px 3px rgba(0, 0, 0, 0.06);
  padding: 22px 20px 0;
}

.overview-title {
  display: flex;
  align-items: center;
  gap: 8px;
}

.overview-title h2 {
  font-size: 18px;
  line-height: 22px;
  font-weight: 700;
}

.badge {
  display: flex;
  align-items: center;
  gap: 4px;
  height: 20px;
  padding: 0 13px;
  border-radius: 10px;
  background-color: #3eb489;
  color: #fff;
  font-size: 12px;
  font-weight: 600;
}

.overview p {
  font-size: 11.2px;
  line-height: 18px;
  color: #6b7280;
  margin-top: 7px;
}

/* category cards */
.cats {
  display: grid;
  grid-template-columns: repeat(3, 1fr);
  gap: 17.5px 16px;
  margin-top: 25px;
}

.cat {
  height: 226.5px;
  border: 1px solid #e8ecef;
  border-radius: 20px;
  background-color: #fff;
  box-shadow: 0 2px 3px rgba(0, 0, 0, 0.06);
  padding: 24px 24px 0;
}

.cat-head {
  display: flex;
  gap: 12px;
  height: 86px;
}

.cat-title {
  flex: 1;
  min-width: 0;
}

.cat-title h3 {
  font-size: 16px;
  line-height: 24px;
  font-weight: 700;
  margin-top: 3px;
}

.cat-title p {
  font-size: 11.5px;
  line-height: 18px;
  color: #9ca3af;
  margin-top: 5px;
  white-space: nowrap;
}

.cat-stat {
  display: flex;
  justify-content: space-between;
  align-items: center;
  height: 20px;
  font-size: 11.5px;
  color: #6b7280;
  font-weight: 500;
}

.grade {
  font-style: normal;
  height: 20px;
  line-height: 20px;
  padding: 0 8px;
  border-radius: 7px;
  font-size: 11.5px;
  font-weight: 600;
}

.grade.good { color: #16a34a; background-color: #e9f6f1; }
.grade.fair { color: #ca8a04; background-color: #fdf3e3; }
.grade.poor { color: #ea580c; background-color: #fff1e8; }

.bar {
  margin-top: 12px;
  height: 6px;
  border-radius: 3px;
  background-color: #e9f6f1;
  overflow: hidden;
}

.bar i {
  display: block;
  height: 100%;
  background-color: #3eb489;
}

.more {
  display: flex;
  align-items: center;
  justify-content: center;
  gap: 8px;
  width: 100%;
  height: 34px;
  margin-top: 20px;
  border: 1px solid #e8ecef;
  border-radius: 10px;
  background-color: #fcfdfd;
  font: inherit;
  font-size: 11.5px;
  font-weight: 500;
  color: #6b7280;
}

/* AI insight */
.insight {
  margin-top: 25px;
  height: 1573px;
  border: 1px solid #e8ecef;
  border-radius: 24px;
  background-color: #fff;
  box-shadow: 0 2px 4px rgba(0, 0, 0, 0.08);
  padding: 25px 24px 0;
}

.insight-head {
  display: flex;
  align-items: center;
  gap: 16px;
  font-size: 15px;
  font-weight: 500;
  color: #1f2937;
}

.tile-lg {
  width: 48px;
  height: 48px;
  border-radius: 16px;
}

.prose {
  margin-top: 34px;
  font-size: 12px;
  line-height: 20px;
  color: #4b5563;
}

.prose h1 {
  font-size: 26.5px;
  line-height: 30px;
  font-weight: 700;
  color: #111827;
}

.prose h2 {
  font-size: 16px;
  line-height: 26px;
  font-weight: 700;
  color: #1f2937;
  margin-top: 17px;
}

.prose h3 {
  font-size: 15px;
  line-height: 22px;
  font-weight: 700;
  color: #1f2937;
  margin-top: 17px;
}

.prose p {
  font-size: 12.2px;
  margin-top: 11px;
}

.prose strong {
  color: #111827;
  font-weight: 700;
}

.prose hr {
  border: none;
  border-top: 1px solid #e6e8eb;
  margin: 38px 0;
}

.prose table {
  width: 100%;
  margin-top: 17px;
  border-collapse: collapse;
  table-layout: fixed;
}

.prose th,
.prose td {
  border: 1px solid #e6e8eb;
  height: 36.5px;
  padding: 0 12px;
  text-align: left;
  font-weight: 400;
}

.prose th {
  background-color: #f6fbf9;
  color: #1f2937;
  font-weight: 600;
}

.prose th:nth-child(1) { width: 257px; }
.prose th:nth-child(2) { width: 344px; }
.prose th:nth-child(3) { width: 268px; }

.prose ul,
.prose ol {
  margin: 9px 0 0;
  padding-left: 26px;
}

.prose ol {
  margin-top: 16px;
}

.prose li {
  margin-top: 2.5px;
}

.prose ul > li::marker {
  color: #c3c8cf;
}

.prose ol > li {
  margin-top: 7px;
}

.prose ol > li:first-child {
  margin-top: 0;
}

.prose ol > li::marker {
  color: #6b7280;
}

.prose .code-list {
  margin-top: 10px;
  padding-bottom: 3px;
}

.prose .code-list li {
  margin-top: 3px;
}

.prose code {
  font-family: "DejaVu Sans Mono", monospace;
  font-size: 11.1px;
  padding: 2px 3px;
  border-radius: 4px;
  background-color: #e9f6f1;
  color: #3eb489;
}

.prose a {
  text-decoration: underline;
  color: #111827;
}

.prose blockquote {
  margin: 18.5px 0 0;
  padding-left: 17px;
  border-left: 1px solid #e6e8eb;
  font-style: italic;
  color: #6b7280;
  line-height: 21px;
}

.prose .why {
  margin-top: 9.5px;
}

.prose .verdict {
  margin-top: -2px;
  padding-right: 4px;
  word-break: break-all;
}

.prose .steps-title {
  margin-top: 17px;
}

/* bottom panels */
.bottom {
  display: grid;
  grid-template-columns: 600px 600px;
  gap: 14px;
  margin-top: 25px;
}

.panel {
  height: 383px;
  border: 1px solid #e8ecef;
  border-radius: 16px;
  background-color: #fff;
  padding: 16px;
}

.panel-head {
  display: flex;
  justify-content: space-between;
  align-items: center;
  height: 24px;
}

.panel-head h3 {
  font-size: 14px;
  font-weight: 700;
}

.pill {
  height: 24px;
  line-height: 24px;
  padding: 0 8px;
  border-radius: 12px;
  background-color: #e9f6f1;
  font-size: 12px;
  color: #6b7280;
}

.radar {
  display: block;
  margin: 31px auto 0;
}

.radar-grid polygon,
.radar-grid path {
  fill: none;
  stroke: #d9dcdf;
  stroke-width: 1;
}

.radar-avg {
  fill: rgba(107, 114, 128, 0.1);
  stroke: #6b7280;
  stroke-width: 1.5;
  stroke-dasharray: 4 3;
}

.radar-site {
  fill: rgba(62, 180, 137, 0.25);
  stroke: #3eb489;
  stroke-width: 2;
}

.radar-labels text {
  font-size: 10.5px;
  fill: #374151;
  text-anchor: middle;
  dominant-baseline: middle;
}

.legend {
  display: flex;
  justify-content: center;
  gap: 10px;
  font-size: 11px;
  line-height: 16px;
  margin-top: 3px;
  padding-right: 10px;
}

.legend span {
  display: flex;
  align-items: center;
  gap: 4px;
}

.legend i {
  width: 14px;
  height: 11px;
}

.legend-site { color: #3eb489; }
.legend-site i { background-color: #3eb489; }
.legend-avg { color: #6b7280; }
.legend-avg i { background-color: #6b7280; }

.bench-sum {
  display: flex;
  gap: 9px;
  font-size: 11px;
  font-weight: 500;
}

.up { color: #16a34a; }
.down { color: #ff2d3a; }
.dot { color: #9ca3af; }

.bench-sub {
  font-size: 11.5px;
  line-height: 18px;
  color: #6b7280;
  margin-top: 6px;
}

.bench {
  margin-top: 6px;
}

.bench-row {
  display: grid;
  grid-template-columns: 96px 378px 48px 44px;
  align-items: center;
  height: 30px;
  font-size: 11.5px;
}

.bench-name {
  display: flex;
  align-items: center;
  color: #6b7280;
}

.bench-name i {
  font-style: normal;
  font-size: 15.5px;
  width: 28px;
}

.track {
  position: relative;
  height: 8px;
  border-radius: 4px;
  background-color: #e9f6f1;
}

.track b {
  display: block;
  height: 100%;
  border-radius: 4px;
  background-color: #3eb489;
}

.track b.low {
  background-color: #ff2d3a;
}

.track u {
  position: absolute;
  top: 0;
  width: 2px;
  height: 100%;
  background-color: rgba(107, 114, 128, 0.45);
}

.delta {
  text-align: right;
  font-size: 10px;
  font-weight: 500;
}

.num {
  text-align: right;
  font-weight: 500;
  color: #1f2937;
  font-size: 12px;
}

.bench-note {
  font-size: 9.5px;
  line-height: 16px;
  color: #9ca3af;
  margin-top: 11px;
}
```
